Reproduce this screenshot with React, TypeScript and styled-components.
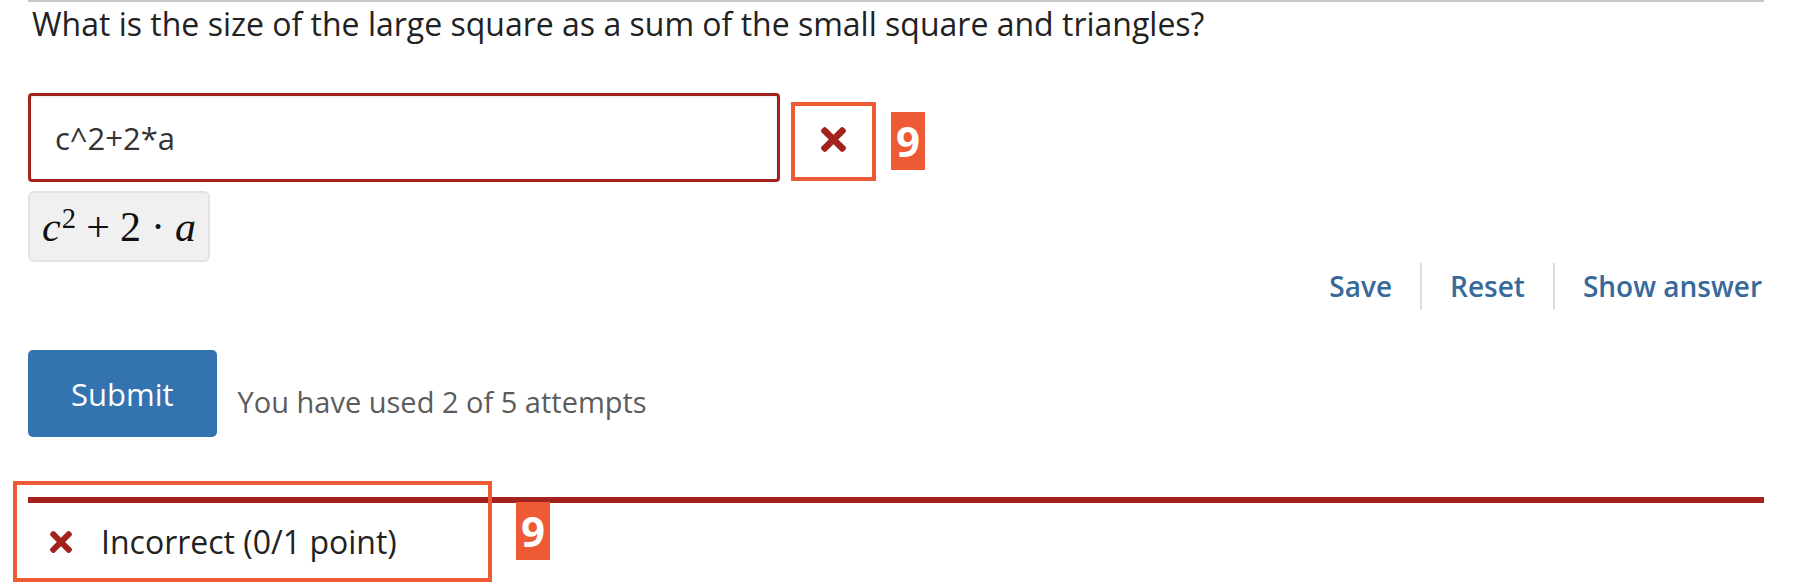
import React from "react";
import styled, { createGlobalStyle } from "styled-components";

const GlobalStyle = createGlobalStyle`
  html, body { margin: 0; padding: 0; background: #ffffff; }
  body {
    font-family: "Open Sans", "Noto Sans", sans-serif;
    -webkit-font-smoothing: antialiased;
  }
  * { box-sizing: border-box; }
`;

const RED = "#a3221e";
const ORANGE = "#ee5a35";

const Problem = styled.div`
  margin-left: 28px;
  width: 1736px;
  border-top: 2px solid #c8c8c8;
`;

const Question = styled.p`
  margin: 0;
  padding: 1px 0 0 4px;
  font-size: 32px;
  line-height: 42px;
  color: #222222;
`;

const AnswerRow = styled.div`
  display: flex;
  align-items: flex-start;
  margin-top: 48px;
`;

const AnswerInput = styled.input`
  width: 752px;
  height: 89px;
  border: 3px solid ${RED};
  border-radius: 4px;
  padding: 0 24px;
  font-family: "Open Sans", sans-serif;
  font-size: 31px;
  color: #333333;
  background: #ffffff;
  box-shadow: inset 0 1px 3px rgba(0, 0, 0, 0.08);
  outline: none;
`;

const StatusBox = styled.div`
  margin: 9px 0 0 11px;
  width: 85px;
  height: 79px;
  border: 4px solid ${ORANGE};
  display: flex;
  align-items: center;
  justify-content: center;
  padding-bottom: 4px;
`;

const Badge = styled.span`
  display: block;
  width: 34px;
  height: 58px;
  background: ${ORANGE};
  color: #ffffff;
  font-family: "Open Sans", sans-serif;
  font-weight: 700;
  font-size: 42px;
  line-height: 58px;
  text-align: center;
`;

const RowBadge = styled(Badge)`
  margin: 19px 0 0 15px;
`;

const FloatingBadge = styled(Badge)`
  position: absolute;
  top: 5px;
  left: 488px;
`;

const MathPreview = styled.div`
  display: flex;
  align-items: center;
  width: fit-content;
  margin-top: 9px;
  height: 71px;
  padding: 0 12px;
  background: #f0f0f0;
  border: 2px solid #e3e3e3;
  border-radius: 6px;
  font-family: "Liberation Serif", "DejaVu Serif", serif;
  font-size: 42px;
  color: #111111;
`;

const MathLine = styled.span`
  line-height: 1;
  white-space: nowrap;
`;

const MathVar = styled.i`
  font-style: italic;
`;

const MathSup = styled.span`
  position: relative;
  top: -0.45em;
  font-size: 0.68em;
  line-height: 0;
  margin-left: 0.04em;
`;

const MathOp = styled.span`
  margin: 0 0.24em;
`;

const Actions = styled.div`
  display: flex;
  justify-content: flex-end;
  margin-top: 1px;
`;

const ActionButton = styled.button<{ $divider?: boolean; $last?: boolean }>`
  background: none;
  border: 0;
  border-left: ${(p) => (p.$divider ? "2px solid #dcdcdc" : "0")};
  padding: 0 ${(p) => (p.$last ? "2px" : "28px")} 0 28px;
  height: 47px;
  font-family: "Open Sans", sans-serif;
  font-weight: 600;
  font-size: 28px;
  line-height: 47px;
  color: #376a99;
  cursor: pointer;
`;

const SubmitRow = styled.div`
  display: flex;
  align-items: flex-end;
  gap: 21px;
  margin-top: 40px;
`;

const SubmitButton = styled.button`
  height: 87px;
  padding: 0 43px;
  background: #3273b0;
  border: 0;
  border-radius: 5px;
  color: #ffffff;
  font-family: "Open Sans", sans-serif;
  font-size: 31px;
  cursor: pointer;
`;

const Attempts = styled.span`
  font-size: 29px;
  line-height: 40px;
  color: #5c5c5c;
  margin-bottom: 15px;
`;

const FeedbackSection = styled.div`
  position: relative;
  margin-top: 60px;
  padding-bottom: 26px;
`;

const Rule = styled.div`
  height: 6px;
  background: ${RED};
`;

const FeedbackMessage = styled.div`
  display: flex;
  align-items: center;
  gap: 29px;
  padding: 18px 0 0 22px;
  font-size: 32px;
  line-height: 42px;
  color: #222222;
`;

const Highlight = styled.div`
  position: absolute;
  top: -16px;
  left: -15px;
  width: 479px;
  height: 101px;
  border: 4px solid ${ORANGE};
  pointer-events: none;
`;

const CrossIcon = ({ size }: { size: number }) => (
  <svg width={size} height={size} viewBox="0 80 352 352" aria-hidden="true">
    <path
      fill={RED}
      d="M242.72 256l100.07-100.07c12.28-12.28 12.28-32.19 0-44.48l-22.24-22.240c-12.28-12.28-32.19-12.28-44.48 0L176 189.28 75.93 89.21c-12.28-12.28-32.19-12.28-44.48 0L9.21 111.45c-12.28 12.28-12.28 32.19 0 44.48L109.28 256 9.21 356.07c-12.28 12.28-12.28 32.19 0 44.48l22.24 22.24c12.28 12.28 32.2 12.28 44.48 0L176 322.72l100.07 100.07c12.28 12.28 32.2 12.28 44.48 0l22.24-22.24c12.28-12.28 12.28-32.190 0-44.48L242.72 256z"
    />
  </svg>
);

export default function App() {
  return (
    <>
      <GlobalStyle />
      <Problem>
        <Question>
          What is the size of the large square as a sum of the small square and triangles?
        </Question>
        <AnswerRow>
          <AnswerInput type="text" defaultValue="c^2+2*a" readOnly />
          <StatusBox>
            <CrossIcon size={25} />
          </StatusBox>
          <RowBadge>9</RowBadge>
        </AnswerRow>
        <MathPreview>
          <MathLine>
            <MathVar>c</MathVar>
            <MathSup>2</MathSup>
            <MathOp>+</MathOp>2<MathOp>·</MathOp>
            <MathVar>a</MathVar>
          </MathLine>
        </MathPreview>
        <Actions>
          <ActionButton>Save</ActionButton>
          <ActionButton $divider>Reset</ActionButton>
          <ActionButton $divider $last>
            Show answer
          </ActionButton>
        </Actions>
        <SubmitRow>
          <SubmitButton>Submit</SubmitButton>
          <Attempts>You have used 2 of 5 attempts</Attempts>
        </SubmitRow>
        <FeedbackSection>
          <Rule />
          <FeedbackMessage>
            <CrossIcon size={22} />
            <span>Incorrect (0/1 point)</span>
          </FeedbackMessage>
          <Highlight />
          <FloatingBadge>9</FloatingBadge>
        </FeedbackSection>
      </Problem>
    </>
  );
}
